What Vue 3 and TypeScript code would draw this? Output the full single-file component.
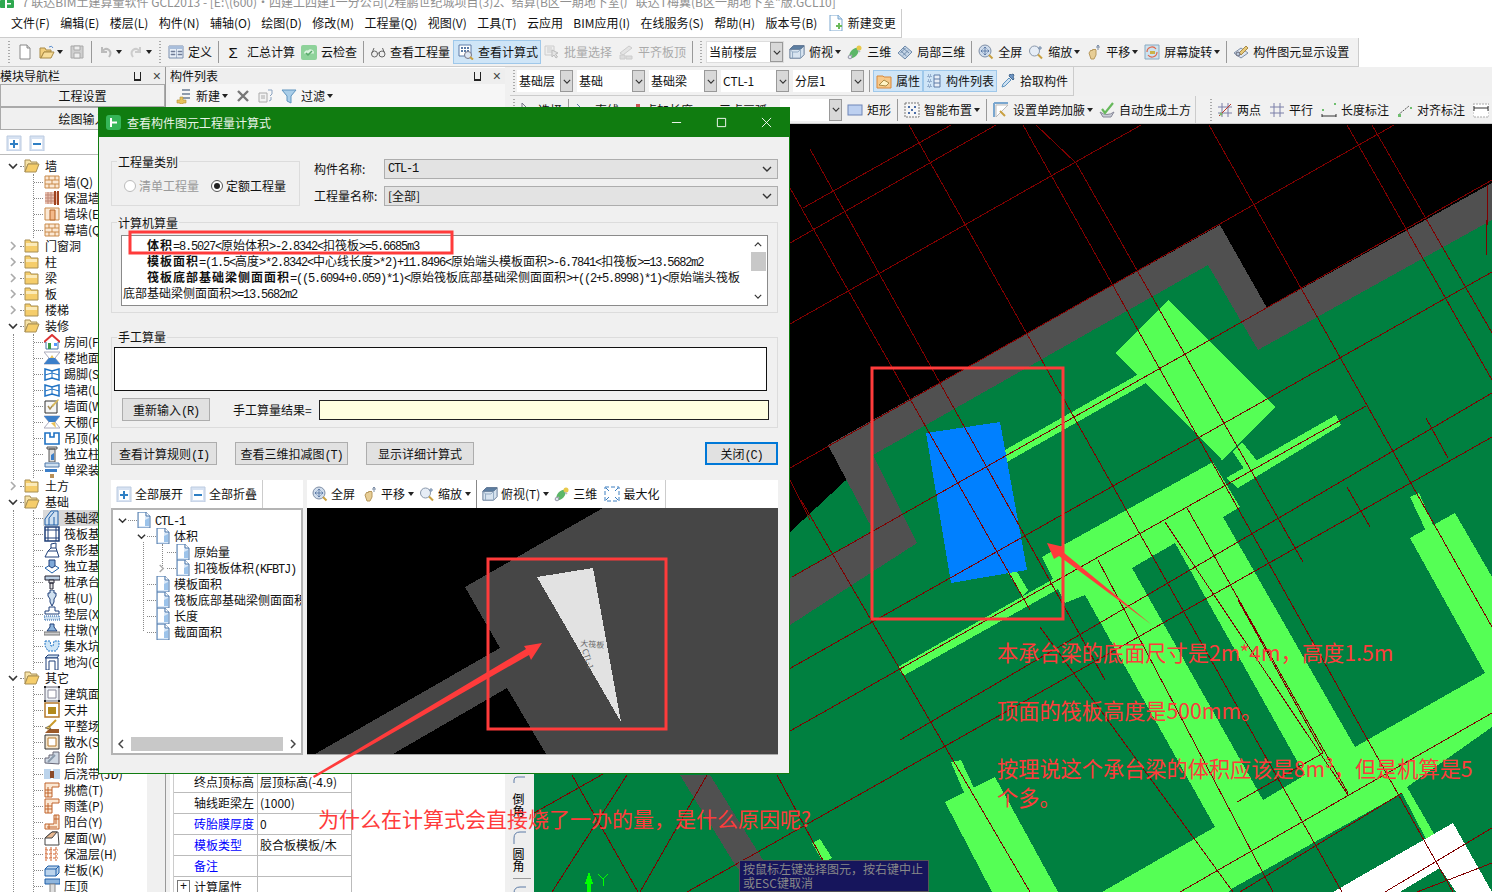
<script setup lang="ts">
interface ToolItem {
  kind?: 'grip' | 'sep' | 'combo'
  icon?: string
  glyph?: string
  text?: string
  caret?: boolean
  off?: boolean
  active?: boolean
  wide?: string
}

interface TreeGroup {
  name: string
  open: boolean
  rail?: boolean
  kids?: { icon: string; text: string; sel?: boolean }[]
}

const menus = ['文件(F)', '编辑(E)', '楼层(L)', '构件(N)', '辅轴(O)', '绘图(D)', '修改(M)', '工程量(Q)', '视图(V)', '工具(T)', '云应用', 'BIM应用(I)', '在线服务(S)', '帮助(H)', '版本号(B)']

const row1: ToolItem[] = [
  { kind: 'grip' },
  { icon: 'i-new' },
  { icon: 'i-open', caret: true },
  { icon: 'i-save', off: true },
  { kind: 'sep' },
  { icon: 'i-undo', caret: true, off: true },
  { icon: 'i-redo', caret: true, off: true },
  { kind: 'grip' },
  { icon: 'i-define', text: '定义' },
  { kind: 'sep' },
  { glyph: 'Σ', text: '汇总计算' },
  { icon: 'i-cloud', text: '云检查' },
  { kind: 'sep' },
  { icon: 'i-glasses', text: '查看工程量' },
  { icon: 'i-calc', text: '查看计算式', active: true },
  { icon: 'i-batch', text: '批量选择', off: true },
  { icon: 'i-align', text: '平齐板顶', off: true },
  { kind: 'sep' },
  { kind: 'grip' },
  { kind: 'combo', text: '当前楼层', wide: 'w80' },
  { icon: 'i-box', text: '俯视', caret: true },
  { icon: 'i-three', text: '三维' },
  { icon: 'i-local', text: '局部三维' },
  { kind: 'sep' },
  { icon: 'i-full', text: '全屏' },
  { icon: 'i-zoom', text: '缩放', caret: true },
  { icon: 'i-pan', text: '平移', caret: true },
  { icon: 'i-rotate', text: '屏幕旋转', caret: true },
  { kind: 'sep' },
  { icon: 'i-show', text: '构件图元显示设置' }
]

const row2: ToolItem[] = [
  { kind: 'grip' },
  { kind: 'combo', text: '基础层', wide: 'w57' },
  { kind: 'combo', text: '基础', wide: 'w68' },
  { kind: 'combo', text: '基础梁', wide: 'w68' },
  { kind: 'combo', text: 'CTL-1', wide: 'w68' },
  { kind: 'combo', text: '分层1', wide: 'w72' },
  { kind: 'sep' },
  { icon: 'i-prop', text: '属性', active: true },
  { icon: 'i-list', text: '构件列表', active: true },
  { icon: 'i-pick', text: '拾取构件' }
]

const row3a: ToolItem[] = [
  { kind: 'grip' },
  { icon: 'i-arrow', text: '选择' },
  { kind: 'sep' },
  { icon: 'i-line', text: '直线' },
  { icon: 'i-ptlen', text: '点加长度' },
  { icon: 'i-arc', text: '三点画弧', caret: true },
  { kind: 'combo', text: '', wide: 'w70' },
  { icon: 'i-rect', text: '矩形' },
  { kind: 'sep' },
  { icon: 'i-smart', text: '智能布置', caret: true },
  { kind: 'sep' },
  { icon: 'i-haunch', text: '设置单跨加腋', caret: true },
  { icon: 'i-auto', text: '自动生成土方' }
]

const row3b: ToolItem[] = [
  { kind: 'grip' },
  { icon: 'i-twopt', text: '两点' },
  { icon: 'i-par', text: '平行' },
  { icon: 'i-dimlen', text: '长度标注' },
  { icon: 'i-dimali', text: '对齐标注' },
  { icon: 'i-dimend' }
]

const navTree: TreeGroup[] = [
  {
    name: '墙', open: true, kids: [
      { icon: 'i-brick', text: '墙(Q)' },
      { icon: 'i-insul', text: '保温墙(Q)' },
      { icon: 'i-pier', text: '墙垛(E)' },
      { icon: 'i-brick', text: '幕墙(Q)' }
    ]
  },
  { name: '门窗洞', open: false },
  { name: '柱', open: false },
  { name: '梁', open: false },
  { name: '板', open: false },
  { name: '楼梯', open: false },
  {
    name: '装修', open: true, rail: true, kids: [
      { icon: 'i-room', text: '房间(F)' },
      { icon: 'i-floor', text: '楼地面(V)' },
      { icon: 'i-skirt', text: '踢脚(S)' },
      { icon: 'i-skirt', text: '墙裙(U)' },
      { icon: 'i-face', text: '墙面(W)' },
      { icon: 'i-ceil', text: '天棚(P)' },
      { icon: 'i-hang', text: '吊顶(K)' },
      { icon: 'i-col', text: '独立柱装修' },
      { icon: 'i-beamdec', text: '单梁装修' }
    ]
  },
  { name: '土方', open: false },
  {
    name: '基础', open: true, rail: true, kids: [
      { icon: 'i-fbeam', text: '基础梁(F)', sel: true },
      { icon: 'i-raft', text: '筏板基础(M)' },
      { icon: 'i-strip', text: '条形基础(T)' },
      { icon: 'i-iso', text: '独立基础(D)' },
      { icon: 'i-cap', text: '桩承台(V)' },
      { icon: 'i-pile', text: '桩(U)' },
      { icon: 'i-pad', text: '垫层(X)' },
      { icon: 'i-pier2', text: '柱墩(Y)' },
      { icon: 'i-pit', text: '集水坑(K)' },
      { icon: 'i-ditch', text: '地沟(G)' }
    ]
  },
  {
    name: '其它', open: true, rail: true, kids: [
      { icon: 'i-area', text: '建筑面积(U)' },
      { icon: 'i-well', text: '天井' },
      { icon: 'i-grade', text: '平整场地(V)' },
      { icon: 'i-apron', text: '散水(S)' },
      { icon: 'i-step', text: '台阶' },
      { icon: 'i-post', text: '后浇带(JD)' },
      { icon: 'i-eave', text: '挑檐(T)' },
      { icon: 'i-eave', text: '雨蓬(P)' },
      { icon: 'i-balc', text: '阳台(Y)' },
      { icon: 'i-roof', text: '屋面(W)' },
      { icon: 'i-lay', text: '保温层(H)' },
      { icon: 'i-rail', text: '栏板(K)' },
      { icon: 'i-cope', text: '压顶' }
    ]
  }
]

const props = [
  { name: '终点顶标高', value: '层顶标高(-4.9)' },
  { name: '轴线距梁左', value: '(1000)' },
  { name: '砖胎膜厚度', value: '0', link: true },
  { name: '模板类型', value: '胶合板模板/木', link: true },
  { name: '备注', value: '', link: true },
  { name: '计算属性', value: '', plus: true }
]

// 把半角字符单独切出来，宽度才能对上
const parts = (s: string) => s.split(/([\x20-\x7e]+)/).filter(Boolean).map((t) => ({ t, latin: /^[\x20-\x7e]/.test(t) }))

const calcLines = [
  { label: '体积', rest: '=8.5027<原始体积>-2.8342<扣筏板>=5.6685m3' },
  { label: '模板面积', rest: '=(1.5<高度>*2.8342<中心线长度>*2)+11.8496<原始端头模板面积>-6.7841<扣筏板>=13.5682m2' },
  { label: '筏板底部基础梁侧面面积', rest: '=((5.6094+0.059)*1)<原始筏板底部基础梁侧面面积>+((2+5.8998)*1)<原始端头筏板底部基础梁侧面面积>=13.5682m2' }
]

const qtyTree = [
  { level: 0, chev: 'open', text: 'CTL-1' },
  { level: 1, chev: 'open', text: '体积' },
  { level: 2, chev: '', text: '原始量' },
  { level: 2, chev: 'shut', text: '扣筏板体积(KFBTJ)' },
  { level: 1, chev: '', text: '模板面积' },
  { level: 1, chev: '', text: '筏板底部基础梁侧面面积' },
  { level: 1, chev: '', text: '长度' },
  { level: 1, chev: '', text: '截面面积' }
]

const previewTools: ToolItem[] = [
  { icon: 'i-full', text: '全屏' },
  { icon: 'i-pan', text: '平移', caret: true },
  { icon: 'i-zoom', text: '缩放', caret: true },
  { kind: 'sep' },
  { icon: 'i-box', text: '俯视(T)', caret: true },
  { icon: 'i-three', text: '三维' },
  { icon: 'i-max', text: '最大化' }
]

const slabs = [
  '1168,300 1275,407 1222,460 1116,353',
  '1005,450 1137,375 1146,383 1007,462',
  '898,667 1055,578 1060,588 903,676',
  '1008,573 1016,570 1028,590 1022,596',
  '1233,452 1242,442 1258,462 1245,470',
  '1336,415 1341,425 1238,488 1226,478',
  '1042,557 1213,462 1240,507 1223,517 1355,747 1485,673 1410,538 1455,513 1492,577 1492,727 1407,787 1445,853 1437,860 1402,793 1233,888 1228,892 1102,892 1215,827 1085,595 1065,603',
  '945,802 995,777 1058,892 992,892',
  '951,762 961,760 975,790 965,795',
  '1040,863 1057,892 1040,892',
  '1410,497 1419,493 1434,527 1426,531',
  '812,843 820,839 832,858 823,862'
]

const redLines = [
  [803, 208, 951, 125], [790, 243, 996, 125], [790, 324, 1141, 125], [790, 468, 1394, 125],
  [792, 577, 1492, 180], [534, 813, 1492, 272], [790, 731, 1366, 406], [900, 740, 1492, 393],
  [687, 892, 1492, 437], [1180, 892, 1492, 713], [1240, 892, 1402, 793], [1385, 892, 1492, 828],
  [1417, 892, 1492, 863], [1237, 802, 1323, 753],
  [810, 149, 1105, 680], [790, 188, 1030, 610], [909, 125, 1342, 892], [1036, 125, 1076, 163],
  [1076, 163, 1303, 562], [1023, 125, 1453, 892], [1209, 125, 1492, 627], [1347, 125, 1492, 380],
  [1372, 125, 1492, 333], [1426, 418, 1448, 458], [1347, 487, 1370, 527], [1098, 560, 1273, 892],
  [1165, 522, 1348, 795], [1187, 508, 1348, 793], [1040, 627, 1233, 892], [1238, 600, 1323, 753],
  [801, 500, 1030, 892], [572, 775, 638, 892], [627, 775, 552, 892], [707, 775, 640, 892],
  [777, 775, 840, 892], [790, 480, 810, 520], [1487, 185, 1487, 225], [1486, 220, 1486, 255]
]
</script>

<template>
  <div class="app">
    <!-- 图标 -->
    <svg class="defs" width="0" height="0">
      <symbol id="i-new" viewBox="0 0 16 16"><path d="M3 1h7l3 3v11H3z" fill="#fff" stroke="#888"/><path d="M10 1v3h3" fill="#ddd" stroke="#888"/></symbol>
      <symbol id="i-open" viewBox="0 0 16 16"><path d="M1 4h5l1 2h5v2H5l-3 6H1z" fill="#f2cf7e" stroke="#a98a45"/><path d="M5 8h10l-3 6H2z" fill="#f7dd9a" stroke="#a98a45"/><path d="M10 3q3-2 4 1" fill="none" stroke="#5a8ed0"/></symbol>
      <symbol id="i-save" viewBox="0 0 16 16"><path d="M2 2h12v12H2z" fill="#cfcfcf" stroke="#aaa"/><path d="M5 2h6v4H5zM5 9h6v5H5z" fill="#eee" stroke="#aaa"/></symbol>
      <symbol id="i-undo" viewBox="0 0 16 16"><path d="M4 3v5h5M4 8q3-5 7-2 3 3 0 7" fill="none" stroke="#bbb" stroke-width="2"/></symbol>
      <symbol id="i-redo" viewBox="0 0 16 16"><path d="M12 3v5H7M12 8q-3-5-7-2-3 3 0 7" fill="none" stroke="#ccc" stroke-width="2"/></symbol>
      <symbol id="i-define" viewBox="0 0 16 16"><path d="M1 2h14v12H1z" fill="#e8eef6" stroke="#7a8fae"/><path d="M1 2h14v3H1z" fill="#a9bedb"/><path d="M3 7h4v1H3zM3 10h4v1H3zM10 7h4v1h-4zM10 10h4v1h-4zM8.5 5v9" fill="#667" stroke="#7a8fae" stroke-width=".6"/></symbol>
      <symbol id="i-cloud" viewBox="0 0 16 16"><rect x="0" y="1" width="16" height="15" rx="2" fill="#8ed29a"/><path d="M3 9.500a3 3 0 0 1 4-3 3.500 3.500 0 0 1 6 3z" fill="#d9f2dd"/><path d="M5 9l2 2 4-4" fill="none" stroke="#59a96a" stroke-width="1.500"/></symbol>
      <symbol id="i-glasses" viewBox="0 0 16 16"><circle cx="4.500" cy="10" r="3" fill="#eee" stroke="#666"/><circle cx="12" cy="10" r="3" fill="#eee" stroke="#666"/><path d="M7.500 9.500q1-1 2 0M2 9l2-5M14.500 9l-2-5" fill="none" stroke="#666"/></symbol>
      <symbol id="i-calc" viewBox="0 0 16 16"><path d="M1 1h12v11H1z" fill="#fff" stroke="#5c7ba6"/><path d="M3 3h2v2H3zM6 3h2v2H6zM9 3h2v2H9zM3 6h2v2H3zM6 6h2v2H6zM9 6h2v2H9z" fill="#5c7ba6"/><circle cx="10" cy="11" r="3.500" fill="#dde6f2" stroke="#778"/><path d="M12 13l3 2.500" stroke="#c9a040" stroke-width="2"/></symbol>
      <symbol id="i-batch" viewBox="0 0 16 16"><path d="M1 2h9v9H1z" fill="#eee" stroke="#ccc"/><path d="M3 4h5M3 6h5M3 8h5" stroke="#ccc"/><path d="M8 6l6 3-2.500 1 2 3-1.500 1-2-3-2 2z" fill="#e4e4e4" stroke="#bbb"/></symbol>
      <symbol id="i-align" viewBox="0 0 16 16"><path d="M2 9l9-7 3 2-9 7z" fill="#e4e4e4" stroke="#ccc"/><path d="M2 11h5v4H2zM8 12h6v3H8z" fill="#ddd" stroke="#ccc"/></symbol>
      <symbol id="i-box" viewBox="0 0 18 16"><path d="M1 5l4-4h12v10l-4 4H1z" fill="#d8e4f0" stroke="#58708e"/><path d="M1 5h12l4-4H5z" fill="#5d7fa3" stroke="#58708e"/><path d="M13 5v10M1 5l3 3h6l3-3M4 8v7" fill="none" stroke="#8aa2bc"/></symbol>
      <symbol id="i-three" viewBox="0 0 16 16"><ellipse cx="7" cy="9" rx="3.500" ry="6" transform="rotate(40 7 9)" fill="#5cb668"/><circle cx="12" cy="4" r="2.500" fill="#e8c94a"/><path d="M1 14l4-3M11 6l2 2" stroke="#b8b8b8" stroke-width="1.500"/><circle cx="3" cy="13" r="1.800" fill="#dfe6ee" stroke="#99a"/></symbol>
      <symbol id="i-local" viewBox="0 0 16 16"><path d="M1 9l7-7 7 6-7 7z" fill="#c4d4e6" stroke="#6f8bab"/><path d="M3.500 9l5-5M6 11.500l5-5M6 4l6 5M3.500 6.500l6 5.500" stroke="#6f8bab" fill="none"/></symbol>
      <symbol id="i-full" viewBox="0 0 16 16"><circle cx="7" cy="7" r="6" fill="#cfdcec" stroke="#7f8fa6"/><path d="M7 3v8M3 7h8M7 3l-1.500 1.500M7 3l1.500 1.500M7 11l-1.500-1.500M7 11l1.500-1.500M3 7l1.500-1.500M3 7l1.500 1.500M11 7l-1.500-1.500M11 7l-1.500 1.500" stroke="#4f6e9e" fill="none" stroke-width=".8"/><path d="M11 11l3.500 3.500" stroke="#c9a040" stroke-width="2"/></symbol>
      <symbol id="i-zoom" viewBox="0 0 16 16"><circle cx="6.500" cy="7" r="5" fill="#e6edf6" stroke="#8a98ab"/><path d="M10 10.500l4 4" stroke="#c9a040" stroke-width="2"/><path d="M12 2v4M10 4h4" stroke="#6d86a8"/></symbol>
      <symbol id="i-pan" viewBox="0 0 16 16"><path d="M3 9l2-3 1 1 1-2 1 1 1-1 1 1v5l-2 4H5z" fill="#e7cd95" stroke="#b7985c"/><path d="M12 1v5M10 3h4M12 1l-1 1M12 1l1 1" stroke="#7d8ea6" fill="none"/></symbol>
      <symbol id="i-rotate" viewBox="0 0 16 16"><path d="M1 1h14v14H1z" fill="#cde2ee" stroke="#89a9c0"/><path d="M3 8a5 5 0 0 1 9-3M13 8a5 5 0 0 1-9 3" fill="none" stroke="#e0664a" stroke-width="1.200"/><path d="M6 7h5v3H6z" fill="#cbb24a"/></symbol>
      <symbol id="i-show" viewBox="0 0 16 16"><path d="M1 9l7-5 7 5-7 5z" fill="#dfe6ef" stroke="#7d8ea6"/><path d="M6 9l7-7 2 2-7 7z" fill="#e6c87a" stroke="#a98a45"/><circle cx="5" cy="10" r="2" fill="#b9c9dc" stroke="#667"/></symbol>
      <symbol id="i-change" viewBox="0 0 16 16"><path d="M2 0h8l4 4v12H2z" fill="#fff" stroke="#7aa7cf"/><path d="M10 0v4h4" fill="#cfe2f3" stroke="#7aa7cf"/><path d="M8 10h2V8h2v2h2v2h-2v2h-2v-2H8z" fill="#6cbb5a"/></symbol>
      <symbol id="i-addlist" viewBox="0 0 16 16"><path d="M6 2h8M6 6h8M6 10h8" stroke="#6c7d94" stroke-width="1.500"/><path d="M1 12h3v-3h3v3h3v3H7v1H4v-1H1z" fill="#e7c25c" stroke="#b3903a" stroke-width=".6"/></symbol>
      <symbol id="i-x" viewBox="0 0 16 16"><path d="M3 3l10 10M13 3L3 13" stroke="#777" stroke-width="2.400"/></symbol>
      <symbol id="i-copy" viewBox="0 0 16 16"><path d="M1 5h8v9H1z" fill="#f3f3f3" stroke="#aaa"/><path d="M3 8h4M3 10h4" stroke="#aaa"/><path d="M10 2h4v4M14 6l-2 2M13 9v3l-2 1" fill="none" stroke="#8aa2c0"/></symbol>
      <symbol id="i-filter" viewBox="0 0 16 16"><path d="M1 2h14l-5 6v7l-4-2V8z" fill="#a9cde8" stroke="#5f94bf"/></symbol>
      <symbol id="i-prop" viewBox="0 0 16 16"><path d="M1 3h6l1 1h7v11H1z" fill="#f7c98a" stroke="#d9883a"/><path d="M3 12l5-5 5 3-3 3z" fill="#fff3c4" stroke="#a98a45"/></symbol>
      <symbol id="i-list" viewBox="0 0 16 16"><path d="M2 2h3v2H2zM2 7h3v2H2zM2 12h3v2H2z" fill="none" stroke="#5c7ba6" stroke-dasharray="1 1"/><path d="M8 2h6v12H8z" fill="#e8eef6" stroke="#5c7ba6"/><path d="M8 6h6M8 10h6" stroke="#5c7ba6"/></symbol>
      <symbol id="i-pick" viewBox="0 0 16 16"><path d="M2 14l1-3 6-6 2 2-6 6z" fill="#cfe2f3" stroke="#5f94bf"/><path d="M9 3l4 4 1-1-1-2 1-2-1-1-2 1-1-1z" fill="#6f97c8" stroke="#46698f"/></symbol>
      <symbol id="i-arrow" viewBox="0 0 16 16"><path d="M4 1l8 8H8l2 5-2 1-2-5-2 3z" fill="#eee" stroke="#778"/></symbol>
      <symbol id="i-line" viewBox="0 0 16 16"><path d="M2 2l12 12" stroke="#5c7ba6"/></symbol>
      <symbol id="i-ptlen" viewBox="0 0 16 16"><path d="M2 14L12 4" stroke="#5c7ba6"/><path d="M11 2h4v4h-4z" fill="#c55"/></symbol>
      <symbol id="i-arc" viewBox="0 0 16 16"><path d="M2 13Q8 0 14 13" fill="none" stroke="#c55"/></symbol>
      <symbol id="i-rect" viewBox="0 0 16 16"><rect x="1" y="3" width="14" height="10" fill="#bdd0f0" stroke="#6f86b8"/></symbol>
      <symbol id="i-smart" viewBox="0 0 16 16"><path d="M1 1h14v14H1z" fill="#f6f6f6" stroke="#777" stroke-dasharray="2 1"/><path d="M4 4h2v2H4zM10 4h2v2h-2zM4 10h2v2H4zM10 10h2v2h-2zM7 7h2v2H7z" fill="#4b6ea8"/></symbol>
      <symbol id="i-haunch" viewBox="0 0 16 16"><path d="M1 1h14M1 1v14" stroke="#7aa7cf" stroke-width="2" fill="#fff"/><path d="M3 3h12L3 15z" fill="#fff" stroke="#bbb"/><path d="M7 9l5 5" stroke="#c9a040" stroke-width="2"/></symbol>
      <symbol id="i-auto" viewBox="0 0 16 16"><path d="M1 10q7 5 14 0l-3 5H4z" fill="#c9ced6" stroke="#889"/><path d="M3 7l3 4 8-10" fill="none" stroke="#67b95c" stroke-width="2.200"/></symbol>
      <symbol id="i-twopt" viewBox="0 0 16 16"><path d="M1 5h14M1 11h14M5 1v14M11 1v14" stroke="#7a7fa8" fill="none"/><path d="M2 14L14 2" stroke="#c0392b"/><circle cx="4" cy="12" r="1.500" fill="#7fb26a"/></symbol>
      <symbol id="i-par" viewBox="0 0 16 16"><path d="M1 5h14M1 11h14M5 1v14M11 1v14" stroke="#7a7fa8" fill="none"/></symbol>
      <symbol id="i-dimlen" viewBox="0 0 16 16"><path d="M1 12v3M15 12v3M1 14h14" stroke="#333" fill="none"/><path d="M1 7h2v2H1zM13 1h2v2h-2z" fill="#6fbf6f"/></symbol>
      <symbol id="i-dimali" viewBox="0 0 16 16"><path d="M1 13L12 4" stroke="#555" stroke-dasharray="2 1"/><path d="M1 12h3v3H1zM13 5h2v2h-2z" fill="#6fbf6f"/></symbol>
      <symbol id="i-dimend" viewBox="0 0 16 16"><path d="M0 2h16v13H0z" fill="#fff" stroke="#aaa" stroke-dasharray="2 1"/><path d="M1 4v5M15 4v5M1 6h14" stroke="#333"/></symbol>
      <symbol id="i-max" viewBox="0 0 16 16"><path d="M1 1h14v14H1z" fill="#fff" stroke="#3d7ec0" stroke-dasharray="4 2"/><path d="M2 2l3 3M14 2l-3 3M2 14l3-3M14 14l-3-3" stroke="#3d7ec0"/></symbol>
      <symbol id="i-plus" viewBox="0 0 16 16"><path d="M1 1h14v15H1z" fill="#d7e2f2" stroke="#bccbe0"/><path d="M3 4h10v10H3z" fill="#fff"/><path d="M8 5v8M4 9h8" stroke="#2f7fc4" stroke-width="2"/></symbol>
      <symbol id="i-minus" viewBox="0 0 16 16"><path d="M1 1h14v15H1z" fill="#d7e2f2" stroke="#bccbe0"/><path d="M3 4h10v10H3z" fill="#fff"/><path d="M4 9h8" stroke="#2f7fc4" stroke-width="2"/></symbol>
      <symbol id="i-fopen" viewBox="0 0 16 16"><path d="M1 2h5l1 2h6v2H4l-3 8z" fill="#f7e3a8" stroke="#a88f55"/><path d="M4 6h11l-3 8H1z" fill="#f5cd6b" stroke="#a88f55"/></symbol>
      <symbol id="i-fshut" viewBox="0 0 16 16"><path d="M1 4V2h5l1 2h7v10H1z" fill="#f5cd6b" stroke="#a88f55"/><path d="M2 5h11v3H2z" fill="#fbeab8"/></symbol>
      <symbol id="i-doc" viewBox="0 0 14 16"><path d="M1 0h8l4 4v12H1z" fill="#d9e8f8" stroke="#4d76a8"/><path d="M2 1h6v13H2z" fill="#fff"/><path d="M9 0v4h4" fill="#fff" stroke="#4d76a8"/><path d="M8 14V8l4-2v8z" fill="#9cc3ea"/></symbol>
      <symbol id="i-brick" viewBox="0 0 16 16"><path d="M1 2h14v12H1z" fill="#fbe8d4" stroke="#c98a4a"/><path d="M1 6h14M1 10h14M5 2v4M11 2v4M8 6v4M5 10v4M11 10v4" stroke="#c98a4a"/></symbol>
      <symbol id="i-insul" viewBox="0 0 16 16"><path d="M1 2h14v12H1z" fill="#e8bfae"/><path d="M1 5h9M1 8h9M1 11h9M4 2v12M7 2v12" stroke="#c08877"/><path d="M11 1v14M14 1v14" stroke="#a0421e" stroke-width="2"/></symbol>
      <symbol id="i-pier" viewBox="0 0 16 16"><path d="M1 2h14v12H1z" fill="#fbe8d4" stroke="#c98a4a"/><path d="M6 4h5v10H6z" fill="#f3b98a" stroke="#b5662a"/></symbol>
      <symbol id="i-room" viewBox="0 0 16 16"><path d="M0 8l8-7 8 7-2 0v7H2V8z" fill="#fff" stroke="#47a"/><path d="M0 8l8-7 8 7" fill="none" stroke="#d33" stroke-width="2"/><path d="M4 9h3v6H4z" fill="#3b9b4a"/><path d="M10 9h3v3h-3z" fill="#59f"/></symbol>
      <symbol id="i-floor" viewBox="0 0 16 16"><path d="M0 2l16 0-5 6 5 6H0l5-6z" fill="#fff" stroke="#aab"/><path d="M5 8h6l5 6H0z" fill="#3c7fc9"/><path d="M6 8l2-3 2 3z" fill="#e7c25c"/></symbol>
      <symbol id="i-skirt" viewBox="0 0 16 16"><path d="M1 3l7 2 7-2v11l-7-2-7 2z" fill="#fff" stroke="#1f72c4" stroke-width="1.500"/><path d="M8 5v7M1 9l7-2 7 2" fill="none" stroke="#1f72c4"/></symbol>
      <symbol id="i-face" viewBox="0 0 16 16"><path d="M1 3h12v12H1z" fill="#f6f6f6" stroke="#333"/><path d="M4 8l2 3 3-4" fill="none" stroke="#a88f55" stroke-width="1.500"/><path d="M8 7l6-6 1 1-6 7z" fill="#d8b85a"/></symbol>
      <symbol id="i-ceil" viewBox="0 0 16 16"><path d="M0 2h16l-5 6 5 6H0l5-6z" fill="#fff" stroke="#aab"/><path d="M0 2h16l-5 6H5z" fill="#3c7fc9"/><path d="M7 9l5 5-1-6z" fill="#e7c25c"/></symbol>
      <symbol id="i-hang" viewBox="0 0 16 16"><path d="M1 3h5v4h4V3h5v11H1z" fill="#fff" stroke="#1f72c4" stroke-width="1.600"/></symbol>
      <symbol id="i-col" viewBox="0 0 16 16"><path d="M3 1h10v2H3zM5 3h6v13H5z" fill="#ddd" stroke="#555"/><path d="M7 9l3-2v7H7z" fill="#3c7fc9"/></symbol>
      <symbol id="i-beamdec" viewBox="0 0 16 16"><path d="M1 1h14v4H1z" fill="#cfe0f0" stroke="#4d76a8"/><path d="M1 7h12v3H1z" fill="#3c7fc9"/><path d="M6 12h4v4H6z" fill="#b99058"/></symbol>
      <symbol id="i-fbeam" viewBox="0 0 16 16"><path d="M1 15V9l6-8h7v14z" fill="#cfe0f0" stroke="#1f5fa8"/><path d="M5 15V8l5-6M10 15V7" stroke="#1f5fa8" fill="none"/></symbol>
      <symbol id="i-raft" viewBox="0 0 16 16"><path d="M1 1h14v14H1z" fill="#fff" stroke="#1f3f78" stroke-width="1.500"/><path d="M4 1v14M12 1v14M1 4h14M1 12h14" stroke="#1f3f78"/></symbol>
      <symbol id="i-strip" viewBox="0 0 16 16"><path d="M1 15l3-6 3-3V2l5-1v5l3 9z" fill="#fff" stroke="#1f3f78"/><path d="M7 6h5M4 9h9" stroke="#1f3f78"/></symbol>
      <symbol id="i-iso" viewBox="0 0 16 16"><path d="M1 10l7-4 7 4-7 5z" fill="#fff" stroke="#1f5fa8"/><path d="M5 2h6v6l-3 2-3-2z" fill="#7ea8d8" stroke="#1f3f78"/></symbol>
      <symbol id="i-cap" viewBox="0 0 16 16"><path d="M1 2h15v4H1z" fill="#bcd0e4" stroke="#223"/><path d="M5 6h5v3H5zM6 9h3v6H6z" fill="#e5e5e5" stroke="#223"/></symbol>
      <symbol id="i-pile" viewBox="0 0 16 16"><path d="M6 0h4v3h2v3l-2 3v3l-2 4-2-4V9L4 6V3h2z" fill="#cfe0f0" stroke="#1f3f78"/></symbol>
      <symbol id="i-pad" viewBox="0 0 16 16"><path d="M5 1h6v4h4v3H1V5h4z" fill="#fff" stroke="#1f3f78"/><path d="M0 10h16v4H0z" fill="#cfe0f0" stroke="#1f5fa8" stroke-dasharray="1 1"/></symbol>
      <symbol id="i-pier2" viewBox="0 0 16 16"><path d="M6 2h4v3l3 4H3l3-4z" fill="#8eb5dd" stroke="#1f3f78"/><path d="M0 10h16v3H0z" fill="#ccc" stroke="#777"/></symbol>
      <symbol id="i-pit" viewBox="0 0 16 16"><path d="M1 3h5l1 5h2l1-5h5v5l-3 5H4L1 8z" fill="#cfe6f7" stroke="#1f72c4" stroke-dasharray="2 1"/></symbol>
      <symbol id="i-ditch" viewBox="0 0 16 16"><path d="M1 4l3-3h11l-2 3z" fill="#cfe0f0" stroke="#1f3f78"/><path d="M2 4h12v12h-3V7H5v9H2z" fill="#fff" stroke="#1f3f78"/></symbol>
      <symbol id="i-area" viewBox="0 0 16 16"><path d="M1 1h14v14H1z" fill="#eef2f6" stroke="#667"/><path d="M4 4h8v8H4z" fill="#fff" stroke="#889"/><path d="M0 0h2v2H0zM14 0h2v2h-2zM0 14h2v2H0zM14 14h2v2h-2z" fill="#222"/></symbol>
      <symbol id="i-well" viewBox="0 0 16 16"><path d="M1 1h14v14H1z" fill="#fff" stroke="#b5782a" stroke-width="1.500"/><path d="M4 5h8v7H4z" fill="#b38a1e"/></symbol>
      <symbol id="i-grade" viewBox="0 0 16 16"><path d="M1 15l4-4h10v4z" fill="#9b5a2a"/><path d="M3 11l9-9" stroke="#c99a2a" stroke-width="2"/><path d="M1 10l4-2 2 3z" fill="#e7c25c" stroke="#333" stroke-width=".5"/></symbol>
      <symbol id="i-apron" viewBox="0 0 16 16"><path d="M1 1h14v14H1z" fill="#f3e4cc" stroke="#333"/><path d="M4 4h8v8H4z" fill="#fff" stroke="#b5782a"/></symbol>
      <symbol id="i-step" viewBox="0 0 16 16"><path d="M1 13V8l4 0V5l4 0V2h6v12z" fill="#cfd8e4" stroke="#667"/><path d="M4 12l7-7" stroke="#89a" stroke-width="2"/></symbol>
      <symbol id="i-post" viewBox="0 0 16 16"><path d="M0 3h7v10H0z" fill="#bcd4ec"/><path d="M9 3h7v10H9z" fill="#bcd4ec"/><path d="M6 5h4v7H6z" fill="#8a4a2a"/></symbol>
      <symbol id="i-eave" viewBox="0 0 16 16"><path d="M1 1h14v4H8v10H1z" fill="#fbe8d4" stroke="#c0622a"/><path d="M1 8h7M1 11h7M4 5v10" stroke="#c0622a"/></symbol>
      <symbol id="i-balc" viewBox="0 0 16 16"><path d="M10 1h5v14H1v-5h9z" fill="#fbe8d4" stroke="#c0622a"/><path d="M3 13h10M5 10v5M10 5h5M12 1v9" stroke="#c0622a"/></symbol>
      <symbol id="i-roof" viewBox="0 0 16 16"><path d="M1 8l7-6h6l1 13H1z" fill="#fff" stroke="#444"/><path d="M1 8l7-6h5L8 8z" fill="#e8b890" stroke="#444"/></symbol>
      <symbol id="i-lay" viewBox="0 0 16 16"><path d="M2 1v14M7 1v14M12 1v14M1 4h13M1 8h13M1 12h13" stroke="#d0602a" fill="none" stroke-dasharray="3 1"/></symbol>
      <symbol id="i-rail" viewBox="0 0 16 16"><path d="M1 7l3-3h11v7l-3 3H1z" fill="#bcd4ec" stroke="#1f5fa8"/><path d="M1 7h11l3-3M12 7v7" fill="none" stroke="#1f5fa8"/></symbol>
      <symbol id="i-cope" viewBox="0 0 16 16"><path d="M1 1h15v5H1z" fill="#8eb5dd" stroke="#1f5fa8"/><path d="M6 6h5v10H6z" fill="#ddd" stroke="#888"/></symbol>
    </svg>

    <div class="titlebar">
      <svg class="app-logo" viewBox="0 0 14 9"><rect width="14" height="8" rx="1" fill="#2fa84f"/><path d="M5 0h2v8H5zM7 3h4v1.500H7z" fill="#fff"/></svg>
      <span>7 联达BIM土建算量软件 GCL2013 - [E:\(600)·四建工四建1一分公司(2程鹏世纪城项目(3)2、结算(B区一期地下室(广联达T梅翼(B区一期地下室"版.GCL10]</span>
    </div>

    <div class="menubar">
      <span v-for="m in menus" :key="m">{{ m }}</span>
      <span class="menu-change"><svg class="ic"><use href="#i-change" /></svg>新建变更</span>
    </div>

    <div class="toolbar row1">
      <template v-for="(it, i) in row1" :key="i">
        <i v-if="it.kind === 'grip'" class="grip" />
        <i v-else-if="it.kind === 'sep'" class="sep" />
        <div v-else-if="it.kind === 'combo'" class="combo" :class="it.wide"><span>{{ it.text }}</span><b class="drop"><svg viewBox="0 0 10 6"><path d="M1 1l4 4 4-4" /></svg></b></div>
        <div v-else class="tool" :class="{ off: it.off, on: it.active }">
          <em v-if="it.glyph" class="glyph">{{ it.glyph }}</em>
          <svg v-else class="ic"><use :href="'#' + it.icon" /></svg>
          <span v-if="it.text">{{ it.text }}</span>
          <u v-if="it.caret" class="caret" />
        </div>
      </template>
    </div>

    <div class="body">
      <!-- 模块导航栏 -->
      <aside class="nav">
        <div class="pane-title"><span>模块导航栏</span><i class="pin" /><i class="closex">×</i></div>
        <button class="nav-btn">工程设置</button>
        <button class="nav-btn">绘图输入</button>
        <div class="nav-main">
          <div class="nav-tree">
            <div class="nav-tools"><svg class="ic"><use href="#i-plus" /></svg><svg class="ic"><use href="#i-minus" /></svg></div>
            <div class="tree-scroll">
              <div v-for="g in navTree" :key="g.name" class="group" :class="{ railed: g.rail }">
                <div class="trow">
                  <svg class="chev" :class="{ shut: !g.open }" viewBox="0 0 10 10"><path :d="g.open ? 'M1 3l4 4 4-4' : 'M3 1l4 4-4 4'" /></svg>
                  <i class="dot" />
                  <svg class="ic"><use :href="g.open ? '#i-fopen' : '#i-fshut'" /></svg>
                  <span>{{ g.name }}</span>
                </div>
                <div v-if="g.kids" class="kids">
                  <div v-for="k in g.kids" :key="k.text" class="trow kid">
                    <i class="dash" />
                    <span class="kid-body" :class="{ sel: k.sel }"><svg class="ic"><use :href="'#' + k.icon" /></svg><span>{{ k.text }}</span></span>
                  </div>
                </div>
              </div>
            </div>
          </div>
        </div>
      </aside>

      <!-- 构件列表 -->
      <section class="list">
        <div class="pane-title"><span>构件列表</span><i class="pin" /><i class="closex">×</i></div>
        <div class="list-tools">
          <div class="tool"><svg class="ic"><use href="#i-addlist" /></svg><span>新建</span><u class="caret" /></div>
          <div class="tool"><svg class="ic"><use href="#i-x" /></svg></div>
          <div class="tool"><svg class="ic"><use href="#i-copy" /></svg></div>
          <div class="tool"><svg class="ic"><use href="#i-filter" /></svg><span>过滤</span><u class="caret" /></div>
        </div>
        <div class="list-body">
          <div class="props">
            <template v-for="p in props" :key="p.name">
              <div class="pname" :class="{ link: p.link }"><i v-if="p.plus" class="plus-box">+</i>{{ p.name }}</div>
              <div class="pval">{{ p.value }}</div>
            </template>
          </div>
        </div>
      </section>

      <!-- 绘图区 -->
      <main class="work">
        <div class="toolbar row2">
          <template v-for="(it, i) in row2" :key="i">
            <i v-if="it.kind === 'grip'" class="grip" />
            <i v-else-if="it.kind === 'sep'" class="sep" />
            <div v-else-if="it.kind === 'combo'" class="combo" :class="it.wide"><span>{{ it.text }}</span><b class="drop"><svg viewBox="0 0 10 6"><path d="M1 1l4 4 4-4" /></svg></b></div>
            <div v-else class="tool" :class="{ on: it.active }"><svg class="ic"><use :href="'#' + it.icon" /></svg><span>{{ it.text }}</span></div>
          </template>
        </div>
        <div class="row3">
          <div class="toolbar row3a">
            <template v-for="(it, i) in row3a" :key="i">
              <i v-if="it.kind === 'grip'" class="grip" />
              <i v-else-if="it.kind === 'sep'" class="sep" />
              <div v-else-if="it.kind === 'combo'" class="combo" :class="it.wide"><span>{{ it.text }}</span><b class="drop"><svg viewBox="0 0 10 6"><path d="M1 1l4 4 4-4" /></svg></b></div>
              <div v-else class="tool"><svg class="ic"><use :href="'#' + it.icon" /></svg><span>{{ it.text }}</span><u v-if="it.caret" class="caret" /></div>
            </template>
          </div>
          <div class="toolbar row3b">
            <template v-for="(it, i) in row3b" :key="i">
              <i v-if="it.kind === 'grip'" class="grip" />
              <div v-else class="tool"><svg class="ic"><use :href="'#' + it.icon" /></svg><span v-if="it.text">{{ it.text }}</span></div>
            </template>
          </div>
        </div>
        <div class="stage">
          <div class="vbar">
            <svg class="ic"><path d="M1 8V5q0-3 3-3h8" fill="none" stroke="#5c7ba6" /></svg>
            <span class="vtext">倒角</span>
            <svg class="ic"><path d="M1 14V8q0-6 6-6h6" fill="none" stroke="#5c7ba6" /></svg>
            <span class="vtext">圆角</span>
            <i class="vsep" />
            <svg class="ic"><path d="M1 14V8q0-6 6-6h6" fill="none" stroke="#5c7ba6" /></svg>
          </div>
          <div class="canvas-wrap">
            <svg class="canvas" viewBox="534 124 958 768" shape-rendering="crispEdges">
              <rect x="534" y="124" width="958" height="768" fill="#000" />
              <polygon points="534,770 873,455 1208,265 1258,350 1492,220 1492,892 534,892" fill="#008040" />
              <polygon points="828,445 1220,225 1267,308 1492,183 1492,220 1258,350 1208,265 873,455 917,543 790,625 534,770 534,720 792,577 873,530" fill="#505050" />
              <polygon points="680,775 710,775 763,860 763,892 737,868" fill="#505050" />
              <polygon v-for="(s, i) in slabs" :key="i" :points="s" fill="#55ff55" />
              <polygon points="1132,568 1175,543 1305,775 1263,800" fill="#008040" />
              <polygon points="1453,823 1492,892 1456,892 1440,868 1400,892 1333,892" fill="#fff" />
              <polygon points="926,433 1000,422 1027,570 951,583" fill="#0080ff" />
              <line v-for="(l, i) in redLines" :key="'l' + i" :x1="l[0]" :y1="l[1]" :x2="l[2]" :y2="l[3]" stroke="#800000" />
              <path d="M589 871l4 13h-2v8h-4v-8h-2z" fill="#00ff00" />
              <path d="M598 874l5 5 5-5M603 879v7" fill="none" stroke="#00ff00" />
            </svg>
            <div class="hint">按鼠标左键选择图元，按右键中止<br />或ESC键取消</div>
          </div>
        </div>
      </main>
    </div>

    <!-- 计算式窗口 -->
    <div class="dialog">
      <header class="dlg-head">
        <svg class="dlg-logo" viewBox="0 0 15 15"><rect width="15" height="15" rx="3" fill="#35b558" /><path d="M4 3h2v9H4zM6 6.500h5v2H6z" fill="#fff" /></svg>
        <span class="dlg-title">查看构件图元工程量计算式</span>
        <svg class="win-btn" viewBox="0 0 12 12"><path d="M1 6h10" /></svg>
        <svg class="win-btn" viewBox="0 0 12 12"><path d="M1.500 1.500h9v9h-9z" /></svg>
        <svg class="win-btn" viewBox="0 0 12 12"><path d="M1 1l10 10M11 1L1 11" /></svg>
      </header>

      <div class="dlg-body">
        <div class="top-row">
          <div class="groupbox kind">
            <label class="legend">工程量类别</label>
            <span class="radio dim"><i />清单工程量</span>
            <span class="radio"><i class="dotted" />定额工程量</span>
          </div>
          <div class="fields">
            <div class="field"><label>构件名称:</label><div class="select"><span class="n">CTL-1</span><svg viewBox="0 0 10 6"><path d="M1 1l4 4 4-4" /></svg></div></div>
            <div class="field"><label>工程量名称:</label><div class="select"><span>[全部]</span><svg viewBox="0 0 10 6"><path d="M1 1l4 4 4-4" /></svg></div></div>
          </div>
        </div>

        <div class="groupbox auto">
          <label class="legend">计算机算量</label>
          <div class="calc">
            <div class="calc-text">
              <p v-for="c in calcLines" :key="c.label"><b>{{ c.label }}</b><template v-for="(p, i) in parts(c.rest)" :key="i"><span v-if="p.latin" class="n">{{ p.t }}</span><template v-else>{{ p.t }}</template></template></p>
            </div>
            <div class="vscroll">
              <svg viewBox="0 0 10 6"><path d="M1 5l4-4 4 4" /></svg>
              <i class="thumb" />
              <svg class="bottom" viewBox="0 0 10 6"><path d="M1 1l4 4 4-4" /></svg>
            </div>
          </div>
        </div>

        <div class="groupbox manual">
          <label class="legend">手工算量</label>
          <div class="manual-input" />
          <div class="manual-row">
            <button class="btn re">重新输入<span class="n">(R)</span></button>
            <label>手工算量结果=</label>
            <div class="result" />
          </div>
        </div>

        <div class="btn-row">
          <button class="btn b1">查看计算规则<span class="n">(I)</span></button>
          <button class="btn b2">查看三维扣减图<span class="n">(T)</span></button>
          <button class="btn b3">显示详细计算式</button>
          <button class="btn b4">关闭<span class="n">(C)</span></button>
        </div>

        <div class="split">
          <div class="left-pane">
            <div class="pane-tools">
              <div class="tool"><svg class="ic"><use href="#i-plus" /></svg><span>全部展开</span></div>
              <div class="tool"><svg class="ic"><use href="#i-minus" /></svg><span>全部折叠</span></div>
              <i class="sep" />
            </div>
            <div class="qty-tree">
              <i class="qrail r1" />
              <i class="qrail r2" />
              <div v-for="(q, i) in qtyTree" :key="i" class="qrow" :class="'lv' + q.level">
                <svg v-if="q.chev" class="chev" :class="{ shut: q.chev === 'shut' }" viewBox="0 0 10 10"><path :d="q.chev === 'open' ? 'M1 3l4 4 4-4' : 'M3 1l4 4-4 4'" /></svg>
                <i v-else class="chev-gap" />
                <i class="dash short" />
                <svg class="doc"><use href="#i-doc" /></svg>
                <span class="qtext"><template v-for="(p, j) in parts(q.text)" :key="j"><span v-if="p.latin" class="n">{{ p.t }}</span><template v-else>{{ p.t }}</template></template></span>
              </div>
              <div class="hscroll">
                <svg viewBox="0 0 6 10"><path d="M5 1L1 5l4 4" /></svg>
                <i class="hthumb" />
                <svg viewBox="0 0 6 10"><path d="M1 1l4 4-4 4" /></svg>
              </div>
            </div>
          </div>
          <div class="right-pane">
            <div class="pane-tools">
              <template v-for="(it, i) in previewTools" :key="i">
                <i v-if="it.kind === 'sep'" class="sep" />
                <div v-else class="tool"><svg class="ic"><use :href="'#' + it.icon" /></svg><span>{{ it.text }}</span><u v-if="it.caret" class="caret" /></div>
              </template>
              <i class="sep" />
            </div>
            <svg class="preview" viewBox="307 508 471 246" shape-rendering="crispEdges">
              <rect x="307" y="508" width="471" height="246" fill="#000" />
              <polygon points="603,508 778,508 778,754 546,754 507,688 393,754 315,754 500,648 465,587" fill="#464646" />
              <polygon points="537,577 593,568 621,722" fill="#e2e2e2" />
              <text x="580" y="646" class="mini" transform="rotate(5 580 646)">大筏板</text>
              <text x="582" y="650" class="mini" transform="rotate(72 582 650)">CTL-1</text>
            </svg>
          </div>
        </div>
      </div>
    </div>

    <!-- 红色批注 -->
    <svg class="marks" width="1492" height="892">
      <rect x="872" y="368" width="191" height="251" />
      <rect x="130" y="232" width="322" height="21" />
      <rect x="488" y="559" width="178" height="170" />
      <polygon points="1047,543 1064,547 1063,552 1152,625 1059,556 1054,559" class="solid" />
      <polygon points="542,643 524,646 526,649 313,776 314,778 529,655 531,660" class="solid" />
    </svg>
    <div class="note note-a">
      <p>本承台梁的底面尺寸是2m*4m，高度1.5m</p>
      <p>顶面的筏板高度是500mm。</p>
      <p>按理说这个承台梁的体积应该是8m³，但是机算是5个多。</p>
    </div>
    <div class="note note-b">为什么在计算式会直接烧了一办的量，是什么原因呢?</div>
  </div>
</template>

<style>
html, body { margin: 0; background: #fff; }
</style>

<style scoped>
.app {
  position: relative;
  width: 1492px;
  height: 892px;
  overflow: hidden;
  background: #fff;
  color: #111;
  font: 12px/16px "Noto Sans CJK SC", "Liberation Sans", sans-serif;
}
.defs { position: absolute; }
i, em, u, b { font-style: normal; text-decoration: none; font-weight: normal; }
.ic { width: 16px; height: 16px; flex: none; display: block; }
.n { font: 12px/10px "Liberation Mono", monospace; letter-spacing: -1.2px; }

.titlebar { height: 9px; overflow: hidden; display: flex; color: #909090; white-space: nowrap; font-size: 12px; line-height: 4px; }
.app-logo { width: 14px; height: 9px; margin-right: 8px; flex: none; }
.menubar {
  width: 890px;
  height: 28px;
  padding-left: 11px;
  display: flex;
  align-items: center;
  gap: 10.400px;
  border-right: 1px solid #ccc;
  border-bottom: 1px solid #ccc;
  white-space: nowrap;
}
.menu-change { display: flex; align-items: center; gap: 4px; }

.toolbar { display: flex; align-items: center; white-space: nowrap; background: #f1f1f1; }
.row1 { width: 1354px; height: 28px; padding-left: 4px; border-right: 1px solid #ccc; border-bottom: 1px solid #ccc; }
.grip { width: 2px; height: 22px; margin: 0 4px; flex: none; background: repeating-linear-gradient(#aaa 0 1px, transparent 1px 3px); }
.sep { width: 1px; height: 22px; margin: 0 3px; background: #999; flex: none; }
.tool { display: flex; align-items: center; gap: 4px; padding: 0 3px; height: 24px; flex: none; }
.tool.off { color: #aaa; }
.tool.on { padding-left: 5px; background: #cfe5f7; outline: 1px solid #9fc8ea; outline-offset: -1px; }
.glyph { width: 16px; text-align: center; font: 15px "Liberation Sans", sans-serif; margin-right: 2px; }
.caret { width: 0; height: 0; border: 3.5px solid transparent; border-top: 4px solid #222; border-bottom: 0; margin-left: -2px; flex: none; }

.combo { display: flex; align-items: center; justify-content: space-between; height: 22px; background: #fff; margin: 0 2px; flex: none; padding-left: 2px; box-sizing: border-box; }
.w80 { width: 78px; border: 1px solid #ddd; margin: 0 2px 0 0; }
.w57 { width: 56px; }
.w68 { width: 68px; }
.w72 { width: 71px; }
.w70 { width: 62px; }
.drop { width: 13px; height: 22px; background: #d8d8d8; border: 1px solid #999; box-sizing: border-box; display: flex; align-items: center; justify-content: center; flex: none; }
.w80 .drop { height: 20px; }
.drop svg, .select svg, .vscroll svg { width: 8px; height: 5px; fill: none; stroke: #333; stroke-width: 1.400; }

.body { display: flex; height: 825px; background: #f0f0f0; }
.pane-title { height: 16px; margin-top: 1px; box-sizing: content-box; display: flex; align-items: center; background: #eee; border-bottom: 0; position: relative; flex: none; }
.pane-title span { flex: 1; }
.pin { width: 5px; height: 7px; border: 1px solid #222; border-width: 0 1px 2px; margin-right: 12px; }
.closex { font: 14px "Liberation Sans", sans-serif; color: #444; margin-right: 4px; }

.nav { width: 166px; flex: none; border-right: 1px solid #999; display: flex; flex-direction: column; box-sizing: border-box; }
.nav-btn { height: 23px; flex: none; background: #f0f0f0; border: 1px solid #aaa; padding: 0; font: inherit; color: #111; }
.nav-main { flex: 1; min-height: 0; background: #f0f0f0; padding-right: 18px; }
.nav-tree { background: #fff; height: 100%; }
.nav-tools { height: 25px; padding: 5px 0 0 6px; display: flex; gap: 7px; border-bottom: 1px solid #bbb; box-sizing: border-box; }
.tree-scroll { padding-top: 3px; overflow: hidden; }
.trow { height: 16px; display: flex; align-items: center; white-space: nowrap; padding-left: 8px; }
.chev { width: 10px; height: 10px; flex: none; fill: none; stroke: #333; stroke-width: 1.600; }
.chev.shut { stroke: #aaa; }
.dot { width: 4px; margin-left: 2px; border-top: 1px dotted #888; flex: none; }
.trow > .ic { margin-right: 5px; }
.kids { margin-left: 33px; border-left: 1px dotted #888; position: relative; }
.railed .kids::before { content: ""; position: absolute; left: -21px; top: 0; bottom: -2px; border-left: 1px dotted #888; }
.trow.kid { padding-left: 0; }
.dash { width: 9px; border-top: 1px dotted #888; flex: none; }
.kid-body { display: flex; align-items: center; gap: 4px; height: 16px; padding-left: 1px; flex: 1; overflow: hidden; }
.kid-body.sel { background: #d9d9d9; }

.list { width: 335px; margin-left: 4px; flex: none; display: flex; flex-direction: column; background: #fff; }
.list .pane-title { background: #eee; }
.list-tools { height: 24px; display: flex; align-items: center; padding-left: 3px; gap: 1px; background: #f6f6f6; flex: none; }
.list-body { flex: 1; padding: 664px 0 0 3px; overflow: hidden; background: #fff; }
.props { display: grid; grid-template-columns: 84px 94px; grid-auto-rows: 21px; width: 179px; border-left: 1px solid #ccc; }
.pname, .pval { border-bottom: 1px solid #bbb; border-right: 1px solid #bbb; white-space: nowrap; line-height: 20px; overflow: hidden; }
.pname { padding-left: 20px; position: relative; }
.pname.link { color: #00f; }
.pval { padding-left: 2px; }
.plus-box { position: absolute; left: 3px; top: 3px; width: 11px; height: 11px; border: 1px solid #777; line-height: 10px; text-align: center; color: #111; font-family: "Liberation Sans", sans-serif; }

.work { flex: 1; min-width: 0; display: flex; flex-direction: column; margin-left: 5px; }
.work .grip { margin: 0 0 0 3px; }
.row2 { width: 564px; height: 29px; box-sizing: border-box; border-right: 1px solid #ccc; border-bottom: 1px solid #ccc; flex: none; }
.row2 .tool.on { height: 22px; padding-left: 3px; }
.row3 { display: flex; height: 28px; box-sizing: border-box; border-bottom: 1px solid #ccc; background: #f1f1f1; flex: none; }
.row3a { width: 687px; border-right: 1px solid #ccc; box-sizing: border-box; }
.row3b { flex: 1; padding-left: 11px; gap: 2px; }
.row3b .grip { margin-right: 0; }
.stage { flex: 1; min-height: 0; display: flex; }
.vbar { width: 24px; flex: none; background: #eee; display: flex; flex-direction: column; align-items: flex-start; padding-top: 651px; box-sizing: border-box; overflow: hidden; }
.vbar .ic { margin-left: 3px; }
.vtext { writing-mode: vertical-rl; margin: 2px 0 6px; line-height: 16px; color: #000; flex: none; }
.vtext:first-of-type { margin-bottom: 13px; }
.vsep { width: 18px; margin: 0 0 6px 3px; border-top: 1px solid #999; flex: none; }
.canvas-wrap { position: relative; flex: 1; min-width: 0; overflow: hidden; }
.canvas { display: block; width: 958px; height: 768px; }
.hint {
  position: absolute;
  left: 205px;
  bottom: 0;
  width: 190px;
  height: 32px;
  box-sizing: border-box;
  padding: 1px 0 0 3px;
  background: #16155c;
  border: 1px solid #555;
  color: #888;
  line-height: 14px;
  font-size: 12px;
}

/* 弹窗 */
.dialog {
  position: absolute;
  left: 98px;
  top: 107px;
  width: 692px;
  height: 667px;
  box-sizing: border-box;
  border: 1px solid #107c10;
  background: #f0f0f0;
  display: flex;
  flex-direction: column;
}
.dlg-head { height: 29px; flex: none; background: #107c10; display: flex; align-items: center; color: #fff; padding-left: 7px; }
.dlg-logo { width: 15px; height: 15px; margin-right: 6px; }
.dlg-title { flex: 1; color: #e8f4e8; }
.win-btn { width: 11px; height: 11px; fill: none; stroke: #fff; stroke-width: 1; margin-right: 34px; }
.win-btn:last-child { margin-right: 17px; }
.dlg-body { padding: 22px 11px 0 12px; flex: 1; }
.top-row { display: flex; height: 47px; }
.groupbox { border: 1px solid #dcdcdc; position: relative; box-sizing: border-box; }
.legend { position: absolute; left: 5px; top: -8px; padding: 0 1px; background: #f0f0f0; }
.manual .legend { top: -9px; }
.kind { width: 189px; height: 45px; margin-top: 2px; display: flex; align-items: center; gap: 12px; padding: 4px 0 0 12px; }
.radio { display: flex; align-items: center; gap: 3px; white-space: nowrap; }
.radio i { width: 10px; height: 10px; border: 1px solid #555; border-radius: 50%; position: relative; background: #fff; }
.radio i.dotted::after { content: ""; position: absolute; left: 2px; top: 2px; width: 6px; height: 6px; border-radius: 50%; background: #222; }
.radio.dim { color: #999; }
.radio.dim i { border-color: #bbb; }
.fields { flex: 1; margin-left: 14px; display: flex; flex-direction: column; gap: 7px; }
.field { display: flex; align-items: center; height: 20px; }
.field label { width: 70px; flex: none; white-space: nowrap; }
.select { flex: 1; height: 20px; box-sizing: border-box; background: #e3e3e3; border: 1px solid #adadad; padding: 0 5px 0 3px; display: flex; align-items: center; justify-content: space-between; }
.select svg { width: 10px; height: 6px; }

.auto { margin-top: 16px; height: 91px; padding: 12px 9px 0; }
.calc { height: 71px; border: 1px solid #8a8a8a; background: #fff; display: flex; box-sizing: border-box; overflow: hidden; }
.calc-text { flex: 1; padding: 1px 6px 0 1px; }
.calc-text p { margin: 0; text-indent: 24px; }
.calc-text b { font-weight: 700; letter-spacing: 1px; }
.vscroll { width: 18px; flex: none; display: flex; flex-direction: column; align-items: center; padding-top: 6px; box-sizing: border-box; position: relative; }
.thumb { width: 15px; height: 19px; background: #c8c8c8; margin-top: 5px; }
.vscroll .bottom { position: absolute; bottom: 6px; }

.manual { margin-top: 24px; height: 91px; padding: 9px 0 0 2px; }
.manual-input { width: 653px; height: 44px; box-sizing: border-box; border: 1px solid #111; background: #fff; }
.manual-row { display: flex; align-items: center; margin-top: 7px; padding-left: 8px; }
.manual-row label { margin: 0 7px 0 23px; white-space: nowrap; }
.result { width: 450px; height: 20px; box-sizing: border-box; background: #ffffe0; border: 1px solid #222; }
.btn { height: 23px; box-sizing: border-box; background: #e1e1e1; border: 1px solid #adadad; padding: 0; font: inherit; color: #111; flex: none; white-space: nowrap; }
.re { width: 88px; }

.btn-row { display: flex; margin-top: 14px; }
.b1 { width: 106px; }
.b2 { width: 113px; margin-left: 18px; }
.b3 { width: 108px; margin-left: 18px; }
.b4 { width: 73px; margin-left: auto; border: 2px solid #0078d7; }

.split { display: flex; margin-top: 15px; gap: 4px; height: 275px; }
.left-pane { width: 192px; display: flex; flex-direction: column; }
.right-pane { flex: 1; display: flex; flex-direction: column; min-width: 0; }
.pane-tools { height: 28px; flex: none; display: flex; align-items: center; background: #fff; padding-left: 3px; white-space: nowrap; }
.pane-tools .tool { gap: 3px; padding: 0 2px; }
.pane-tools .caret { margin: 0 1px 0 0; }
.left-pane .pane-tools .tool + .tool { margin-left: 3px; }
.pane-tools .sep { height: 28px; background: #ccc; margin: 0 0 0 auto; }
.left-pane .pane-tools .sep { margin: 0 0 0 3px; }
.right-pane .pane-tools .tool:first-child { margin-right: 3px; }
.right-pane .pane-tools .sep + .tool { margin-left: 1px; }
.right-pane .pane-tools .tool:nth-last-of-type(1) { margin-left: 3px; }
.right-pane .pane-tools .sep:not(:last-child) { margin: 0 2px; background: #888; }
.right-pane .pane-tools .sep:last-child { margin-left: 4px; }
.qty-tree { flex: 1; position: relative; background: #fff; border: 2px solid #b4b4b4; box-sizing: border-box; padding-top: 2px; overflow: hidden; }
.qrail { position: absolute; border-left: 1px dotted #888; }
.r1 { left: 30px; top: 32px; height: 89px; }
.r2 { left: 49px; top: 34px; height: 24px; }
.qrow { height: 16px; display: flex; align-items: center; white-space: nowrap; position: relative; }
.qrow.lv0 { padding-left: 5px; }
.qrow.lv1 { padding-left: 24px; }
.qrow.lv2 { padding-left: 44px; }
.qrow .chev, .chev-gap { width: 9px; height: 9px; flex: none; }
.dash.short { width: 9px; margin: 0 0 0 1px; }
.doc { width: 14px; height: 16px; flex: none; margin-right: 4px; }
.qtext { flex: none; }
.hscroll { position: absolute; left: 0; right: 0; bottom: 1px; height: 16px; display: flex; align-items: center; background: #fff; padding: 0 2px; gap: 4px; box-sizing: border-box; }
.hscroll svg { width: 6px; height: 10px; fill: none; stroke: #444; stroke-width: 1.500; flex: none; margin: 0 3px; }
.hthumb { flex: 1; height: 14px; background: #c8c8c8; }
.preview { display: block; width: 471px; height: 246px; border-bottom: 1px solid #aaa; }
.mini { font-size: 8px; fill: #666; }

.marks { position: absolute; left: 0; top: 0; pointer-events: none; }
.marks rect { fill: none; stroke: #ff3b3b; stroke-width: 3; }
.marks .solid { fill: #ff3b3b; stroke: none; }
.note { position: absolute; color: #ff3b3b; pointer-events: none; }
.note-a { left: 997px; top: 637px; width: 476px; font-size: 21.200px; line-height: 29px; }
.note-a p { margin: 0 0 29px; }
.note-b { left: 318px; top: 804px; font-size: 21px; line-height: 29px; white-space: nowrap; }
</style>
